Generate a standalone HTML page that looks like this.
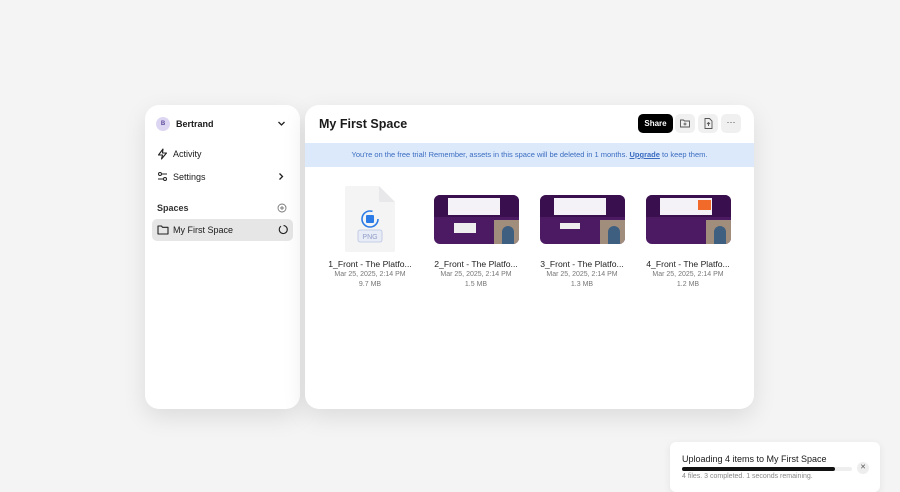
<!DOCTYPE html><html><head><style>
*{box-sizing:border-box;margin:0;padding:0}
body{width:900px;height:484px;background:#f4f4f4;font-family:"Liberation Sans",sans-serif;position:relative;overflow:hidden;color:#1a1a1a}
.card{position:absolute;background:#fff;border-radius:14px;box-shadow:0 8px 24px rgba(0,0,0,.10)}
.side{left:145px;top:105px;width:155px;height:304px}
.main{left:305px;top:105px;width:449px;height:304px;overflow:hidden}
.abs{position:absolute}
.t{font-size:9px}
.thumb{position:absolute;top:195px;width:85px;height:49px;border-radius:6px;background:#4b1a63;overflow:hidden}
.thumb .top{position:absolute;left:0;top:0;width:100%;height:22px;background:#3a0f4d}
.thumb .pop{position:absolute;left:14px;top:3px;width:52px;height:17px;background:#f4f2f6}
.thumb .img{position:absolute;right:0;bottom:0;width:25px;height:24px;background:#a08d7c}
.thumb .img:after{content:"";position:absolute;left:8px;top:6px;width:12px;height:18px;background:#3e5f80;border-radius:6px 6px 0 0}
.name{position:absolute;width:100px;text-align:center;font-size:8.6px;color:#222}
.meta{position:absolute;width:100px;text-align:center;font-size:7px;color:#777;line-height:10px}
</style></head><body>
<div class="card side">
 <div class="abs" style="left:11px;top:12px;width:14px;height:14px;border-radius:50%;background:#ddd6f3;font-size:6px;color:#5a4a9a;text-align:center;line-height:14px;font-weight:bold">B</div>
 <div class="abs t" style="left:31px;top:14px;font-weight:bold">Bertrand</div>
 <svg class="abs" style="left:132px;top:15px" width="9" height="7" viewBox="0 0 9 7"><path d="M1.5 2l3 3 3-3" fill="none" stroke="#222" stroke-width="1.3"/></svg>
 <svg class="abs" style="left:12px;top:43px" width="11" height="12" viewBox="0 0 11 12"><path d="M6 1L1.5 7H5.5L4.5 11 9.5 5H5.5Z" fill="none" stroke="#222" stroke-width="1.1" stroke-linejoin="round"/></svg>
 <div class="abs t" style="left:28px;top:44px">Activity</div>
 <svg class="abs" style="left:12px;top:66px" width="11" height="11" viewBox="0 0 11 11"><g fill="none" stroke="#222" stroke-width="1"><circle cx="3" cy="3" r="1.5"/><path d="M5 3h5M1 8h5"/><circle cx="8" cy="8" r="1.5"/></g></svg>
 <div class="abs t" style="left:28px;top:67px">Settings</div>
 <svg class="abs" style="left:133px;top:67px" width="6" height="9" viewBox="0 0 6 9"><path d="M1.5 1.5l3 3-3 3" fill="none" stroke="#222" stroke-width="1.3"/></svg>
 <div class="abs t" style="left:12px;top:98px;font-weight:bold;color:#333">Spaces</div>
 <svg class="abs" style="left:132px;top:98px" width="10" height="10" viewBox="0 0 10 10"><circle cx="5" cy="5" r="4" fill="none" stroke="#777" stroke-width=".9"/><path d="M5 3v4M3 5h4" stroke="#777" stroke-width=".9"/></svg>
 <div class="abs" style="left:7px;top:114px;width:141px;height:22px;border-radius:5px;background:#e6e6e6"></div>
 <svg class="abs" style="left:12px;top:119px" width="12" height="11" viewBox="0 0 12 11"><path d="M1 2h3.5l1 1.3H11V10H1Z" fill="none" stroke="#222" stroke-width="1.1" stroke-linejoin="round"/></svg>
 <div class="abs t" style="left:28px;top:120px">My First Space</div>
 <svg class="abs" style="left:133px;top:119px" width="11" height="11" viewBox="0 0 11 11"><path d="M3 2.2A4 4 0 1 0 5.5 1.5" fill="none" stroke="#222" stroke-width="1.1"/></svg>
</div>
<div class="card main">
 <div class="abs" style="left:14px;top:12px;font-size:12.5px;font-weight:bold">My First Space</div>
 <div class="abs" style="left:333px;top:9px;width:35px;height:19px;border-radius:5px;background:#000;color:#fff;font-size:8px;font-weight:bold;text-align:center;line-height:19px">Share</div>
 <div class="abs" style="left:370px;top:9px;width:20px;height:19px;border-radius:5px;background:#f0f0f0"></div>
 <svg class="abs" style="left:375px;top:14px" width="10" height="9" viewBox="0 0 10 9"><path d="M.5 1h3l1 1H9.5V8H.5Z M5 3.5v3M3.5 5h3" fill="none" stroke="#555" stroke-width=".9"/></svg>
 <div class="abs" style="left:393px;top:9px;width:20px;height:19px;border-radius:5px;background:#f0f0f0"></div>
 <svg class="abs" style="left:399px;top:13px" width="9" height="11" viewBox="0 0 9 11"><path d="M1 .5h4.5l2.5 2.5v7.5H1Z M4.5 8V4.5M3 6l1.5-1.5L6 6" fill="none" stroke="#555" stroke-width=".9"/></svg>
 <div class="abs" style="left:416px;top:9px;width:20px;height:19px;border-radius:5px;background:#f0f0f0;text-align:center;font-size:9px;line-height:16px;color:#444">···</div>
 <div class="abs" style="left:0;top:38px;width:449px;height:24px;background:#dce9fb;text-align:center;font-size:7.5px;line-height:24px;color:#3a6cc0">You're on the free trial! Remember, assets in this space will be deleted in 1 months. <u style="font-weight:bold">Upgrade</u> to keep them.</div>
</div>
<svg class="abs" style="left:344px;top:185px" width="52" height="68" viewBox="0 0 52 68"><path d="M3 1H35L51 17V65Q51 67 49 67H3Q1 67 1 65V3Q1 1 3 1Z" fill="#f4f4f5"/><path d="M35 1V15Q35 17 37 17H51" fill="#e8e8ea"/><circle cx="26" cy="34" r="8" fill="none" stroke="#2d7be6" stroke-width="1.6" stroke-dasharray="40 10"/><rect x="22" y="30" width="8" height="8" rx="1" fill="#2d7be6"/><rect x="14" y="45" width="24" height="12" rx="2" fill="#e8ecf7" stroke="#b9c3e0" stroke-width=".8"/><text x="26" y="54" font-size="7" text-anchor="middle" fill="#8f9cc6" font-family="Liberation Sans">PNG</text></svg>
<div class="thumb" style="left:434px"><div class="top"></div><div class="pop"></div><div class="abs" style="left:20px;top:28px;width:22px;height:10px;background:#eee"></div><div class="img"></div></div>
<div class="thumb" style="left:540px"><div class="top"></div><div class="pop"></div><div class="abs" style="left:20px;top:28px;width:20px;height:6px;background:#eee"></div><div class="img"></div></div>
<div class="thumb" style="left:646px"><div class="top"></div><div class="pop"></div><div class="abs" style="left:52px;top:5px;width:13px;height:10px;background:#f26a2a"></div><div class="img"></div></div>
<div class="name" style="left:320px;top:259px">1_Front - The Platfo...</div>
<div class="meta" style="left:320px;top:270px">Mar 25, 2025, 2:14 PM<br>9.7 MB</div>
<div class="name" style="left:426px;top:259px">2_Front - The Platfo...</div>
<div class="meta" style="left:426px;top:270px">Mar 25, 2025, 2:14 PM<br>1.5 MB</div>
<div class="name" style="left:532px;top:259px">3_Front - The Platfo...</div>
<div class="meta" style="left:532px;top:270px">Mar 25, 2025, 2:14 PM<br>1.3 MB</div>
<div class="name" style="left:638px;top:259px">4_Front - The Platfo...</div>
<div class="meta" style="left:638px;top:270px">Mar 25, 2025, 2:14 PM<br>1.2 MB</div>
<div class="abs" style="left:670px;top:442px;width:210px;height:50px;background:#fff;border-radius:6px;box-shadow:0 2px 8px rgba(0,0,0,.08)"></div>
<div class="abs" style="left:682px;top:454px;font-size:9px">Uploading 4 items to My First Space</div>
<div class="abs" style="left:682px;top:467px;width:170px;height:4px;border-radius:2px;background:#eee"><div style="width:153px;height:4px;border-radius:2px;background:#111"></div></div>
<div class="abs" style="left:857px;top:462px;width:12px;height:12px;border-radius:50%;background:#eee;font-size:7px;text-align:center;line-height:12px;color:#555">✕</div>
<div class="abs" style="left:682px;top:473px;font-size:7px;color:#888">4 files. 3 completed. 1 seconds remaining.</div>
</body></html>
